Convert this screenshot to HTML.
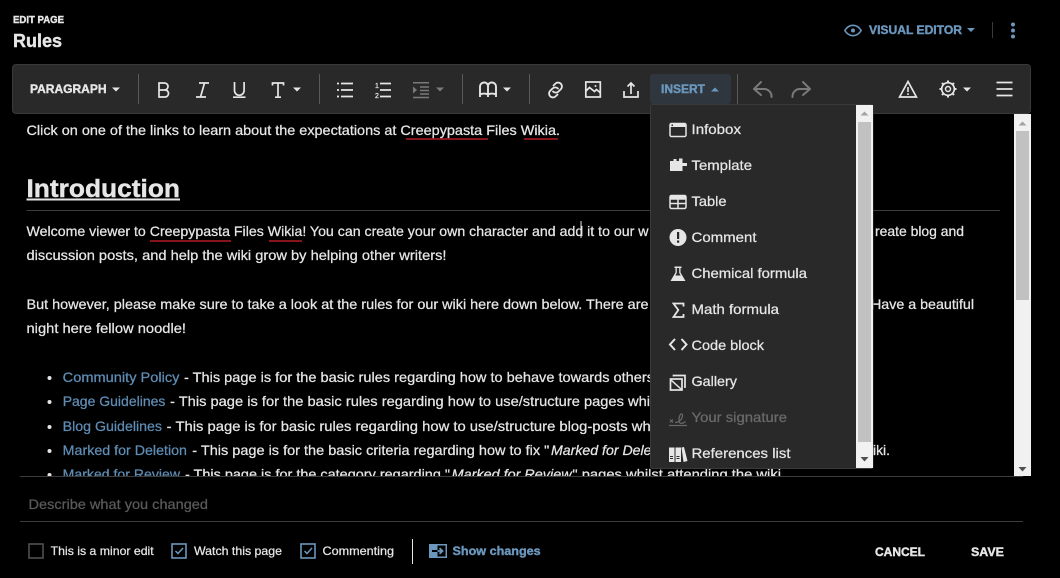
<!DOCTYPE html>
<html><head><meta charset="utf-8"><title>Edit Rules</title>
<style>
html,body{margin:0;padding:0;background:#000;width:1060px;height:578px;overflow:hidden}
svg{display:block;font-family:"Liberation Sans",sans-serif}
text{stroke-width:.25}
.t{font-size:14px;fill:#e6e6e6;stroke:#e6e6e6}
.l{font-size:14px;fill:#5f8db5;stroke:#5f8db5}
.ic{fill:none;stroke:#e6e6e6;stroke-width:1.7}
.f{fill:#e6e6e6}
text[fill="#e6e6e6"],g[fill="#e6e6e6"] text{stroke:#e6e6e6}
g[fill="#e6e6e6"] text[fill="#6a6a6a"]{stroke:#6a6a6a}
text[fill="#6b97bd"]{stroke:#6b97bd}
text[font-weight="bold"]{stroke-width:.4}
</style></head><body>
<svg width="1060" height="578" viewBox="0 0 1060 578" xmlns="http://www.w3.org/2000/svg">
<defs>
<clipPath id="ed"><rect x="12" y="114" width="1002" height="362"/></clipPath>
<pattern id="zz" x="0" y="0" width="4" height="2" patternUnits="userSpaceOnUse">
<path d="M0 .5L1 1.500L2 .5L3 1.500L4 .5" fill="none" stroke="#d8202a" stroke-width=".9"/>
</pattern>
</defs>
<rect width="1060" height="578" fill="#000"/>

<!-- header -->
<text x="13" y="23" font-size="10" font-weight="bold" fill="#e6e6e6" textLength="51" lengthAdjust="spacingAndGlyphs">EDIT PAGE</text>
<text x="13" y="47" font-size="18" font-weight="bold" fill="#e6e6e6" textLength="49" lengthAdjust="spacingAndGlyphs">Rules</text>

<path d="M844.800 30.500C847 27 849.800 25.300 853 25.300S859 27 861.200 30.500C859 34 856.200 35.700 853 35.700S847 34 844.800 30.500Z" fill="none" stroke="#6b97bd" stroke-width="1.600"/>
<circle cx="853" cy="30.500" r="2" fill="#6b97bd"/>
<text x="869" y="34" font-size="12" font-weight="bold" fill="#6b97bd" textLength="93" lengthAdjust="spacingAndGlyphs">VISUAL EDITOR</text>
<path d="M967 28h8l-4 4z" fill="#6b97bd"/>
<rect x="992" y="22" width="1" height="16" fill="#3a3a3a"/>
<circle cx="1013" cy="24.500" r="2" fill="#6b97bd"/><circle cx="1013" cy="30.500" r="2" fill="#6b97bd"/><circle cx="1013" cy="36.500" r="2" fill="#6b97bd"/>

<!-- editor text -->
<g clip-path="url(#ed)">
<text class="t" x="26.500" y="135" textLength="533.500" lengthAdjust="spacingAndGlyphs">Click on one of the links to learn about the expectations at Creepypasta Files Wikia.</text>
<rect x="406" y="138" width="82" height="2" fill="url(#zz)"/><rect x="524" y="138" width="34" height="2" fill="url(#zz)"/>
<text x="26.500" y="197" font-size="25" font-weight="bold" fill="#e6e6e6" textLength="153.500" lengthAdjust="spacingAndGlyphs">Introduction</text>
<rect x="26.500" y="198.500" width="153.500" height="2" fill="#e6e6e6"/>
<rect x="26.500" y="210" width="973.500" height="1" fill="#3c3c3c"/>

<text class="t" x="26.500" y="236" textLength="622" lengthAdjust="spacingAndGlyphs">Welcome viewer to Creepypasta Files Wikia! You can create your own character and add it to our w</text>
<text class="t" x="875" y="236" textLength="89" lengthAdjust="spacingAndGlyphs">reate blog and</text>
<rect x="150" y="240" width="81" height="2" fill="url(#zz)"/><rect x="269" y="240" width="33" height="2" fill="url(#zz)"/>
<rect x="580.500" y="221" width="1" height="17" fill="#e6e6e6"/>
<text class="t" x="26.500" y="260" textLength="420" lengthAdjust="spacingAndGlyphs">discussion posts, and help the wiki grow by helping other writers!</text>
<text class="t" x="26.500" y="309" textLength="622" lengthAdjust="spacingAndGlyphs">But however, please make sure to take a look at the rules for our wiki here down below. There are</text>
<text class="t" x="871" y="309" textLength="103" lengthAdjust="spacingAndGlyphs">Have a beautiful</text>
<text class="t" x="26.500" y="333" textLength="159.500" lengthAdjust="spacingAndGlyphs">night here fellow noodle!</text>

<g fill="#e6e6e6"><circle cx="49.500" cy="378" r="2"/><circle cx="49.500" cy="402" r="2"/><circle cx="49.500" cy="427" r="2"/><circle cx="49.500" cy="451" r="2"/><circle cx="49.500" cy="475" r="2"/></g>

<text class="l" x="62.700" y="382" textLength="116.800" lengthAdjust="spacingAndGlyphs">Community Policy</text>
<text class="t" x="184" y="382" textLength="470" lengthAdjust="spacingAndGlyphs">- This page is for the basic rules regarding how to behave towards others</text>
<text class="l" x="62.700" y="406" textLength="102.700" lengthAdjust="spacingAndGlyphs">Page Guidelines</text>
<text class="t" x="170" y="406" textLength="480" lengthAdjust="spacingAndGlyphs">- This page is for the basic rules regarding how to use/structure pages whi</text>
<text class="l" x="62.700" y="431" textLength="99.300" lengthAdjust="spacingAndGlyphs">Blog Guidelines</text>
<text class="t" x="166.700" y="431" textLength="484" lengthAdjust="spacingAndGlyphs">- This page is for basic rules regarding how to use/structure blog-posts wh</text>
<text class="l" x="62.700" y="455" textLength="124.300" lengthAdjust="spacingAndGlyphs">Marked for Deletion</text>
<text class="t" x="192.300" y="455" textLength="357" lengthAdjust="spacingAndGlyphs">- This page is for the basic criteria regarding how to fix "</text>
<text class="t" x="551" y="455" font-style="italic" textLength="100.500" lengthAdjust="spacingAndGlyphs">Marked for Dele</text>
<text class="t" x="873" y="455" textLength="17" lengthAdjust="spacingAndGlyphs">iki.</text>
<text class="l" x="62.700" y="479" textLength="117.300" lengthAdjust="spacingAndGlyphs">Marked for Review</text>
<text class="t" x="185" y="479" textLength="265" lengthAdjust="spacingAndGlyphs">- This page is for the category regarding "</text>
<text class="t" x="451.600" y="479" font-style="italic" textLength="120" lengthAdjust="spacingAndGlyphs">Marked for Review</text>
<text class="t" x="572.400" y="479" textLength="208.600" lengthAdjust="spacingAndGlyphs">" pages whilst attending the wiki</text>
</g>

<!-- main scrollbar -->
<rect x="1014" y="114" width="17" height="362" fill="#f1f1f1"/>
<rect x="1016" y="131" width="13" height="169" fill="#c1c1c1"/>
<path d="M1018.500 125.500h8l-4-4z" fill="#a3a3a3"/>
<path d="M1018.500 467h8l-4 4.500z" fill="#505050"/>

<!-- toolbar -->
<rect x="12.500" y="64.500" width="1018" height="49" rx="3.500" fill="#292929" stroke="#3a3a3a"/>
<text x="30" y="93" font-size="12" font-weight="bold" fill="#e6e6e6" textLength="76.500" lengthAdjust="spacingAndGlyphs">PARAGRAPH</text>
<path class="f" d="M112 87.500h8l-4 4z"/>
<g fill="#5a5a5a"><rect x="138" y="74" width="1" height="30"/><rect x="319" y="74" width="1" height="30"/><rect x="462" y="74" width="1" height="30"/><rect x="529" y="74" width="1" height="30"/><rect x="737" y="74" width="1" height="30"/></g>

<!-- B I U T -->
<path class="ic" d="M159 83h5.500a3.500 3.500 0 0 1 0 7H159zM159 90h6a3.500 3.500 0 0 1 0 7h-6z"/>
<path class="ic" d="M199 83h10M196 97h10M204.500 83l-4 14"/>
<path class="ic" d="M234.500 82v8.500a4.800 4.800 0 0 0 9.600 0V82M233 97.200h12.500"/>
<path class="ic" d="M272.500 85.500V83h11v2.500M278 83v14M275 97.200h6"/>
<path class="f" d="M293 87.500h8l-4 4z"/>
<!-- lists -->
<path class="ic" d="M341 83.500h12M341 90h12M341 96.500h12M337 83.500h2M337 90h2M337 96.500h2"/>
<path class="ic" d="M380 83.500h11M380 90h11M380 96.500h11"/>
<text x="375" y="88" font-size="7" fill="#e6e6e6">1</text><text x="375" y="98" font-size="7" fill="#e6e6e6">2</text>
<g stroke="#7a7a7a" stroke-width="1.500" fill="none"><path d="M413 82.800h16M420 87h9M420 90.500h9M420 94h9M413 97.500h16"/></g>
<path d="M413 86.500v7l4-3.500z" fill="#7a7a7a"/>
<path d="M436 87.500h8l-4 4z" fill="#7a7a7a"/>
<path d="M480 97V86.500a4 4 0 0 1 4-4h.5a3.500 3.500 0 0 1 3.500 3.500v8M488 86a3.500 3.500 0 0 1 3.500-3.500h.5a4 4 0 0 1 4 4V97M480 94.500c2.500-1.200 6-1.200 8 0 2-1.200 5.500-1.200 8 0M488 94v3" fill="none" stroke="#e6e6e6" stroke-width="1.900"/>
<path class="f" d="M503 87.500h8l-4 4z"/>
<!-- link image upload -->
<g fill="none" stroke="#e6e6e6" stroke-width="1.800" stroke-linecap="round">
<path d="M553.500 85.500l2-2a3.900 3.900 0 0 1 5.500 5.500l-2.500 2.500a3.900 3.900 0 0 1-5.500 0"/>
<path d="M557.500 94.500l-2 2a3.900 3.900 0 0 1-5.500-5.500l2.500-2.500a3.900 3.900 0 0 1 5.500 0"/>
</g>
<rect x="585.800" y="82" width="14.500" height="15" class="ic"/>
<path class="ic" d="M586 91l3.500-3.500 5 4 2-2 3.500 3"/>
<circle cx="595.500" cy="86" r="1" class="f"/>
<path class="ic" d="M624 91v6h14v-6M631 94V83M627.500 86.500l3.500-3.500 3.500 3.500"/>

<!-- insert button -->
<rect x="650" y="74" width="81" height="30" rx="3" fill="#2f363d"/>
<text x="661" y="93" font-size="12" font-weight="bold" fill="#6b97bd" textLength="44" lengthAdjust="spacingAndGlyphs">INSERT</text>
<path d="M711 91.500h8l-4-4z" fill="#6b97bd"/>

<!-- undo redo -->
<g fill="none" stroke="#7a7a7a" stroke-width="2" stroke-linecap="round" stroke-linejoin="round">
<path d="M761 82l-7 7 7 6M754.500 89H764a7.500 7.500 0 0 1 7.500 8"/>
<path d="M803 82l7 7-7 6M809.500 89H800a7.500 7.500 0 0 0-7.500 8"/>
</g>
<!-- warning -->
<path class="ic" d="M908 81.500l8.400 15.500h-16.800z"/>
<rect x="907.200" y="87" width="1.600" height="5" class="f"/><rect x="907.200" y="93.300" width="1.600" height="1.700" class="f"/>
<!-- gear -->
<circle cx="948" cy="89" r="6.300" fill="none" stroke="#e6e6e6" stroke-width="1.700"/>
<circle cx="948" cy="89" r="2.500" fill="none" stroke="#e6e6e6" stroke-width="1.500"/>
<path d="M948 80.500v2.500M948 95v2.500M939.500 89h2.500M954 89h2.500M942 83l1.800 1.800M952.200 93.200L954 95M954 83l-1.800 1.800M943.800 93.200L942 95" stroke="#e6e6e6" stroke-width="2" fill="none"/>
<path class="f" d="M963 87.500h8l-4 4z"/>
<!-- burger -->
<path d="M996.500 82.500h16M996.500 89h16M996.500 95.500h16" stroke="#e6e6e6" stroke-width="1.700" fill="none"/>

<!-- footer -->
<rect x="20" y="476" width="994" height="1" fill="#3c3c3c"/><rect x="1014" y="476" width="9" height="1" fill="#3c3c3c"/>
<text x="28.500" y="509" font-size="14" fill="#5a5a5a" stroke="#5a5a5a" textLength="179.500" lengthAdjust="spacingAndGlyphs">Describe what you changed</text>
<rect x="20" y="521" width="1003" height="1" fill="#3c3c3c"/>

<rect x="29" y="544" width="14" height="14" fill="none" stroke="#505050" stroke-width="1.600"/>
<text x="50.700" y="555" font-size="12" fill="#e6e6e6" textLength="103" lengthAdjust="spacingAndGlyphs">This is a minor edit</text>
<rect x="172" y="544" width="14" height="14" fill="none" stroke="#6b97bd" stroke-width="1.600"/>
<path d="M175.500 551l2.500 2.500 5-5.500" fill="none" stroke="#6b97bd" stroke-width="1.500"/>
<text x="194" y="555" font-size="12" fill="#e6e6e6" textLength="88" lengthAdjust="spacingAndGlyphs">Watch this page</text>
<rect x="301" y="544" width="14" height="14" fill="none" stroke="#6b97bd" stroke-width="1.600"/>
<path d="M304.500 551l2.500 2.500 5-5.500" fill="none" stroke="#6b97bd" stroke-width="1.500"/>
<text x="322.500" y="555" font-size="12" fill="#e6e6e6" textLength="71.500" lengthAdjust="spacingAndGlyphs">Commenting</text>
<rect x="412" y="539" width="1" height="25" fill="#e6e6e6"/>
<rect x="429" y="544" width="18" height="14" fill="#6b97bd"/>
<rect x="437.500" y="545.500" width="8" height="11" fill="#000"/>
<path d="M432 551h5.500" stroke="#000" stroke-width="2" fill="none"/>
<path d="M437.500 551h4M439.500 548.200l3 2.800-3 2.800" fill="none" stroke="#6b97bd" stroke-width="1.800"/>
<text x="452.500" y="555" font-size="12" font-weight="bold" fill="#6b97bd" textLength="88.200" lengthAdjust="spacingAndGlyphs">Show changes</text>
<text x="875" y="556" font-size="12" font-weight="bold" fill="#e6e6e6" textLength="50" lengthAdjust="spacingAndGlyphs">CANCEL</text>
<text x="971" y="556" font-size="12" font-weight="bold" fill="#e6e6e6" textLength="33" lengthAdjust="spacingAndGlyphs">SAVE</text>

<!-- dropdown -->
<rect x="650.500" y="104.500" width="222.500" height="364" rx="2" fill="#292929" stroke="#3a3a3a"/>
<rect x="856" y="105" width="17" height="363" fill="#f1f1f1"/>
<rect x="858" y="122" width="13" height="320" fill="#c1c1c1"/>
<path d="M860.500 115.500h8l-4-4z" fill="#a3a3a3"/>
<path d="M860.500 457h8l-4 4.500z" fill="#505050"/>

<g font-size="14" fill="#e6e6e6">
<text x="691.500" y="134" textLength="49.500" lengthAdjust="spacingAndGlyphs">Infobox</text>
<text x="691.500" y="170" textLength="60.500" lengthAdjust="spacingAndGlyphs">Template</text>
<text x="691.500" y="206" textLength="35" lengthAdjust="spacingAndGlyphs">Table</text>
<text x="691.500" y="242" textLength="65" lengthAdjust="spacingAndGlyphs">Comment</text>
<text x="691.500" y="278" textLength="115.500" lengthAdjust="spacingAndGlyphs">Chemical formula</text>
<text x="691.500" y="314" textLength="87.500" lengthAdjust="spacingAndGlyphs">Math formula</text>
<text x="691.500" y="350" textLength="72.500" lengthAdjust="spacingAndGlyphs">Code block</text>
<text x="691.500" y="386" textLength="45.500" lengthAdjust="spacingAndGlyphs">Gallery</text>
<text x="691.500" y="422" fill="#6a6a6a" textLength="95.500" lengthAdjust="spacingAndGlyphs">Your signature</text>
<text x="691.500" y="458" textLength="99" lengthAdjust="spacingAndGlyphs">References list</text>
</g>
<!-- infobox -->
<rect x="670" y="123.500" width="16" height="13" rx="1.500" fill="none" stroke="#e6e6e6" stroke-width="1.500"/>
<rect x="670" y="123.500" width="16" height="3.500" fill="#e6e6e6"/>
<rect x="671.500" y="124.500" width="1.500" height="1.500" fill="#292929"/>
<!-- template -->
<path class="f" d="M670 161h3.500v-2h3v2h2.500v-2.500h3.500V163h4.500v3h-4.500v5H670z"/>
<!-- table -->
<rect x="670" y="195.500" width="16" height="13" rx="1.500" fill="none" stroke="#e6e6e6" stroke-width="1.500"/>
<path d="M670 199h16M670 203.500h16M678 199v9" stroke="#e6e6e6" stroke-width="1.500" fill="none"/>
<rect x="670" y="195.500" width="16" height="3.500" fill="#e6e6e6"/>
<!-- comment -->
<circle cx="678" cy="237.500" r="8.500" fill="#e6e6e6"/>
<rect x="677" y="232" width="2.200" height="7" fill="#292929"/><rect x="677" y="240.500" width="2.200" height="2.200" fill="#292929"/>
<!-- flask -->
<path class="f" d="M674.500 266.500h7v1.500h-1v4.500l5 8.500h-15l5-8.500V268h-1z"/>
<path d="M676.800 268v5l-1.500 2.500h5.400l-1.500-2.500v-5z" fill="#292929"/>
<!-- sigma -->
<path d="M683.500 306.500v-3h-10l4.800 6.500-4.800 7h10v-3" fill="none" stroke="#e6e6e6" stroke-width="1.800"/>
<!-- code -->
<path d="M675 339l-5 5.500 5 5.500M681.500 339l5 5.500-5 5.500" fill="none" stroke="#e6e6e6" stroke-width="2"/>
<!-- gallery -->
<rect x="670.500" y="379" width="11.500" height="11" fill="none" stroke="#e6e6e6" stroke-width="1.700"/>
<path d="M671 380l10.500 9.500" stroke="#e6e6e6" stroke-width="1.500"/>
<path d="M673.500 376.500v-1h11.500v11.500h-1" fill="none" stroke="#e6e6e6" stroke-width="1.700"/>
<!-- signature -->
<g fill="none" stroke="#6a6a6a" stroke-width="1.200">
<path d="M669 425.500h18M670 419.500l3 3M673 419.500l-3 3"/>
<path d="M675 422.500c4 0 7-3 7.500-6.500.300-2-1.500-3-2.500-1-1 2.500-1.300 5.500-.5 7.500.8 1.500 3.500 1 6-1"/>
</g>
<!-- references -->
<path class="f" d="M669 447.500h5.500v14.500H669zM675.500 447.500h5.500v14.500h-5.500zM681.500 447.500l2.500-.5 3.500 14-4 1z"/>
<path d="M670 456.500h3M670 458.500h3M676.500 456.500h3M676.500 458.500h3" stroke="#292929" stroke-width="1"/>
</svg>
</body></html>
